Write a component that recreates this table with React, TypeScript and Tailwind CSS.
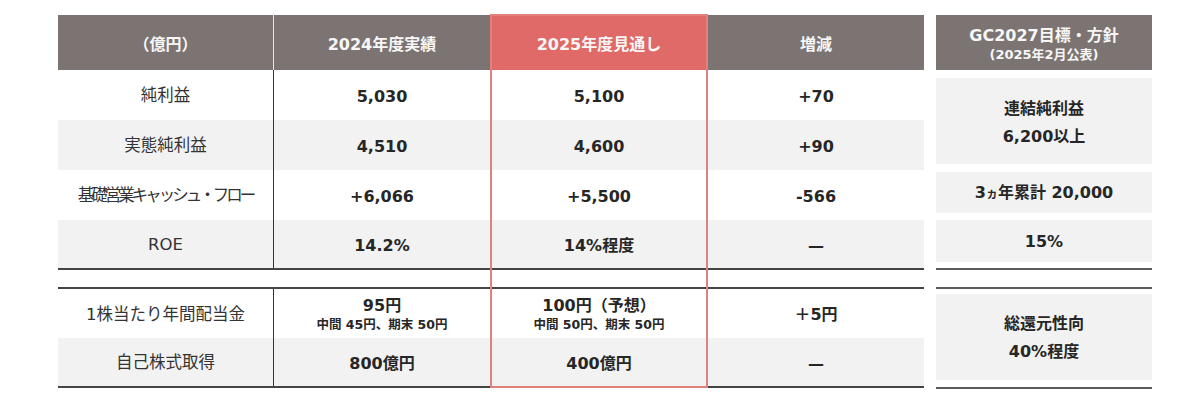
import React from "react";

type Row = {
  label: string;
  labelClass?: string;
  actual: React.ReactNode;
  forecast: React.ReactNode;
  diff: React.ReactNode;
  height: string;
  shaded?: boolean;
};

const upperRows: Row[] = [
  { label: "純利益", actual: "5,030", forecast: "5,100", diff: "+70", height: "h-[50px]" },
  { label: "実態純利益", actual: "4,510", forecast: "4,600", diff: "+90", height: "h-[50px]", shaded: true },
  {
    label: "基礎営業キャッシュ・フロー",
    labelClass: "tracking-[-3px]",
    actual: "+6,066",
    forecast: "+5,500",
    diff: "-566",
    height: "h-[50px]",
  },
  { label: "ROE", actual: "14.2%", forecast: "14%程度", diff: "—", height: "h-[48px]", shaded: true },
];

function TwoLine({ main, sub }: { main: string; sub: string }) {
  return (
    <div className="flex flex-col items-center">
      <span className="text-[16px] leading-[20px]">{main}</span>
      <span className="text-[12.5px] leading-[18px]">{sub}</span>
    </div>
  );
}

const lowerRows: Row[] = [
  {
    label: "1株当たり年間配当金",
    actual: <TwoLine main="95円" sub="中間 45円、期末 50円" />,
    forecast: <TwoLine main="100円（予想）" sub="中間 50円、期末 50円" />,
    diff: "＋5円",
    height: "h-[49px]",
  },
  { label: "自己株式取得", actual: "800億円", forecast: "400億円", diff: "—", height: "h-[48px]", shaded: true },
];

function TableRow({ row }: { row: Row }) {
  return (
    <div className={`flex ${row.height} ${row.shaded ? "bg-[#f2f2f2]" : "bg-white"}`}>
      <div
        className={`w-[216px] flex items-center justify-center pt-[3px] border-r-[1.5px] border-[#333] text-[16.5px] text-[#333] ${row.labelClass ?? ""}`}
      >
        {row.label}
      </div>
      <div className="w-[216px] flex items-center justify-center pt-[3px] text-[16px] font-bold text-[#262626]">{row.actual}</div>
      <div className="w-[218px] flex items-center justify-center pt-[3px] text-[16px] font-bold text-[#262626]">{row.forecast}</div>
      <div className="w-[216px] flex items-center justify-center pt-[3px] text-[16px] font-bold text-[#262626]">{row.diff}</div>
    </div>
  );
}

function MainTable() {
  return (
    <div className="relative w-[866px] flex flex-col">
      {/* header */}
      <div className="flex h-[55px] text-[16px] font-bold text-[#f7f7f7]">
        <div className="w-[216px] flex items-center justify-center pt-[4px] bg-[#7c7472] border-r border-[#e8e4e3]">（億円）</div>
        <div className="w-[216px] flex items-center justify-center pt-[4px] bg-[#7c7472]">2024年度実績</div>
        <div className="w-[218px] flex items-center justify-center pt-[4px] bg-[#e06a67]">2025年度見通し</div>
        <div className="w-[216px] flex items-center justify-center pt-[4px] bg-[#7c7472]">増減</div>
      </div>

      <div className="border-b-2 border-[#444]">
        {upperRows.map((r) => (
          <TableRow key={r.label} row={r} />
        ))}
      </div>

      <div className="h-[17px]" />

      <div className="border-y-2 border-[#444]">
        {lowerRows.map((r) => (
          <TableRow key={r.label} row={r} />
        ))}
      </div>

      {/* 2025 column highlight frame */}
      <div className="pointer-events-none absolute left-[432px] top-[-1px] bottom-0 w-[218px] border-2 border-[#e2807e]" />
    </div>
  );
}

function TargetBox({ className, children }: { className: string; children: React.ReactNode }) {
  return (
    <div className={`bg-[#f2f2f2] flex flex-col items-center justify-center text-[16px] font-bold text-[#262626] ${className}`}>
      {children}
    </div>
  );
}

function TargetColumn() {
  return (
    <div className="w-[216px] flex flex-col">
      <div className="h-[55px] bg-[#7c7472] flex flex-col items-center justify-center pt-[4px] font-bold text-[#f7f7f7]">
        <span className="text-[16px] leading-[20px]">GC2027目標・方針</span>
        <span className="text-[13px] leading-[18px]">(2025年2月公表)</span>
      </div>

      <TargetBox className="mt-[7.5px] h-[86px] leading-[28px] pt-[4px]">
        <span>連結純利益</span>
        <span>6,200以上</span>
      </TargetBox>
      <TargetBox className="mt-[8px] h-[41px] pt-[2px]">
        <span>
          3<span className="text-[12px]">ヵ</span>年累計 20,000
        </span>
      </TargetBox>
      <TargetBox className="mt-[7.5px] h-[42px] pt-[2px]">15%</TargetBox>

      <div className="mt-[6px] h-[2px] bg-[#5a5a5a]" />
      <div className="h-[17px]" />
      <div className="h-[2px] bg-[#5a5a5a]" />

      <TargetBox className="mt-[4.5px] h-[86.5px] leading-[28px] pt-[3px]">
        <span>総還元性向</span>
        <span>40%程度</span>
      </TargetBox>

      <div className="mt-[6.5px] h-[2px] bg-[#5a5a5a]" />
    </div>
  );
}

export default function App() {
  return (
    <div className="w-[1200px] h-[401px] overflow-hidden bg-white flex items-start gap-[12px] pt-[15px] pl-[58px] font-['DejaVu_Sans','Noto_Sans_CJK_JP',sans-serif]">
      <MainTable />
      <TargetColumn />
    </div>
  );
}
